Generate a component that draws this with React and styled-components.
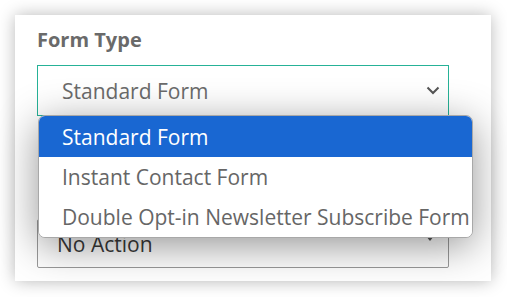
import React from "react";
import styled, { createGlobalStyle } from "styled-components";

const Global = createGlobalStyle`
  html, body { margin: 0; padding: 0; background: #ffffff; }
  body { font-family: "Open Sans", "Noto Sans", sans-serif; }
  * { box-sizing: border-box; }
`;

const Page = styled.div`
  width: 507px;
  height: 297px;
  padding: 15px 16px 16px 15px;
  background: #ffffff;
`;

const Card = styled.div`
  width: 476px;
  height: 266px;
  background: #ffffff;
  box-shadow: 0 0 16px rgba(0, 0, 0, 0.28);
  padding: 12px 0 0 22px;
  display: flex;
  flex-direction: column;
`;

const Label = styled.div`
  font-size: 20px;
  font-weight: 700;
  color: #6a6a6a;
  line-height: 26px;
  height: 26px;
  margin-bottom: 12px;
`;

const Field = styled.div`
  position: relative;
  width: 412px;
`;

const SelectBox = styled.div`
  width: 412px;
  height: ${(p) => p.$h}px;
  border: 1px solid ${(p) => (p.$focus ? "#26b297" : "#9a9a9a")};
  border-radius: ${(p) => (p.$focus ? 0 : 2)}px;
  background: #ffffff;
  display: flex;
  align-items: center;
  justify-content: space-between;
  padding: 0 ${(p) => (p.$focus ? 8 : 14)}px 0 ${(p) => (p.$focus ? 24 : 19)}px;
  font-size: 21px;
  color: ${(p) => (p.$focus ? "#6b6b6b" : "#3a3a3a")};
`;

const Caret = styled.div`
  width: 0;
  height: 0;
  border-left: 4px solid transparent;
  border-right: 4px solid transparent;
  border-top: 5px solid #555;
  margin-top: -10px;
`;

const Menu = styled.ul`
  position: absolute;
  left: 1px;
  top: 50px;
  width: 435px;
  margin: 0;
  padding: 0;
  list-style: none;
  background: #ffffff;
  border: 1px solid #a8a8a8;
  border-radius: 7px;
  overflow: hidden;
  box-shadow: 0 8px 40px rgba(0, 0, 0, 0.42);
  z-index: 2;
`;

const Option = styled.li`
  height: ${(p) => (p.$first ? 41 : 40)}px;
  display: flex;
  align-items: center;
  padding-left: 23px;
  font-size: 21px;
  white-space: nowrap;
  color: ${(p) => (p.$active ? "#ffffff" : "#666666")};
  background: ${(p) => (p.$active ? "#1967d2" : "#ffffff")};
`;

const Spacer = styled.div`
  height: 103px;
  flex-shrink: 0;
`;

const options = [
  "Standard Form",
  "Instant Contact Form",
  "Double Opt-in Newsletter Subscribe Form",
];

export default function App() {
  return (
    <>
      <Global />
      <Page>
        <Card>
          <Label>Form Type</Label>
          <Field>
            <SelectBox $focus $h={51}>
              <span>Standard Form</span>
              <svg width="14" height="9" viewBox="0 0 14 9">
                <path d="M1.5 1.5 L7 7 L12.5 1.5" fill="none" stroke="#555" strokeWidth="2" />
              </svg>
            </SelectBox>
            <Menu>
              {options.map((o, i) => (
                <Option key={o} $active={i === 0} $first={i === 0}>
                  {o}
                </Option>
              ))}
            </Menu>
          </Field>
          <Spacer />
          <SelectBox $h={49}>
            <span>No Action</span>
            <Caret />
          </SelectBox>
        </Card>
      </Page>
    </>
  );
}
